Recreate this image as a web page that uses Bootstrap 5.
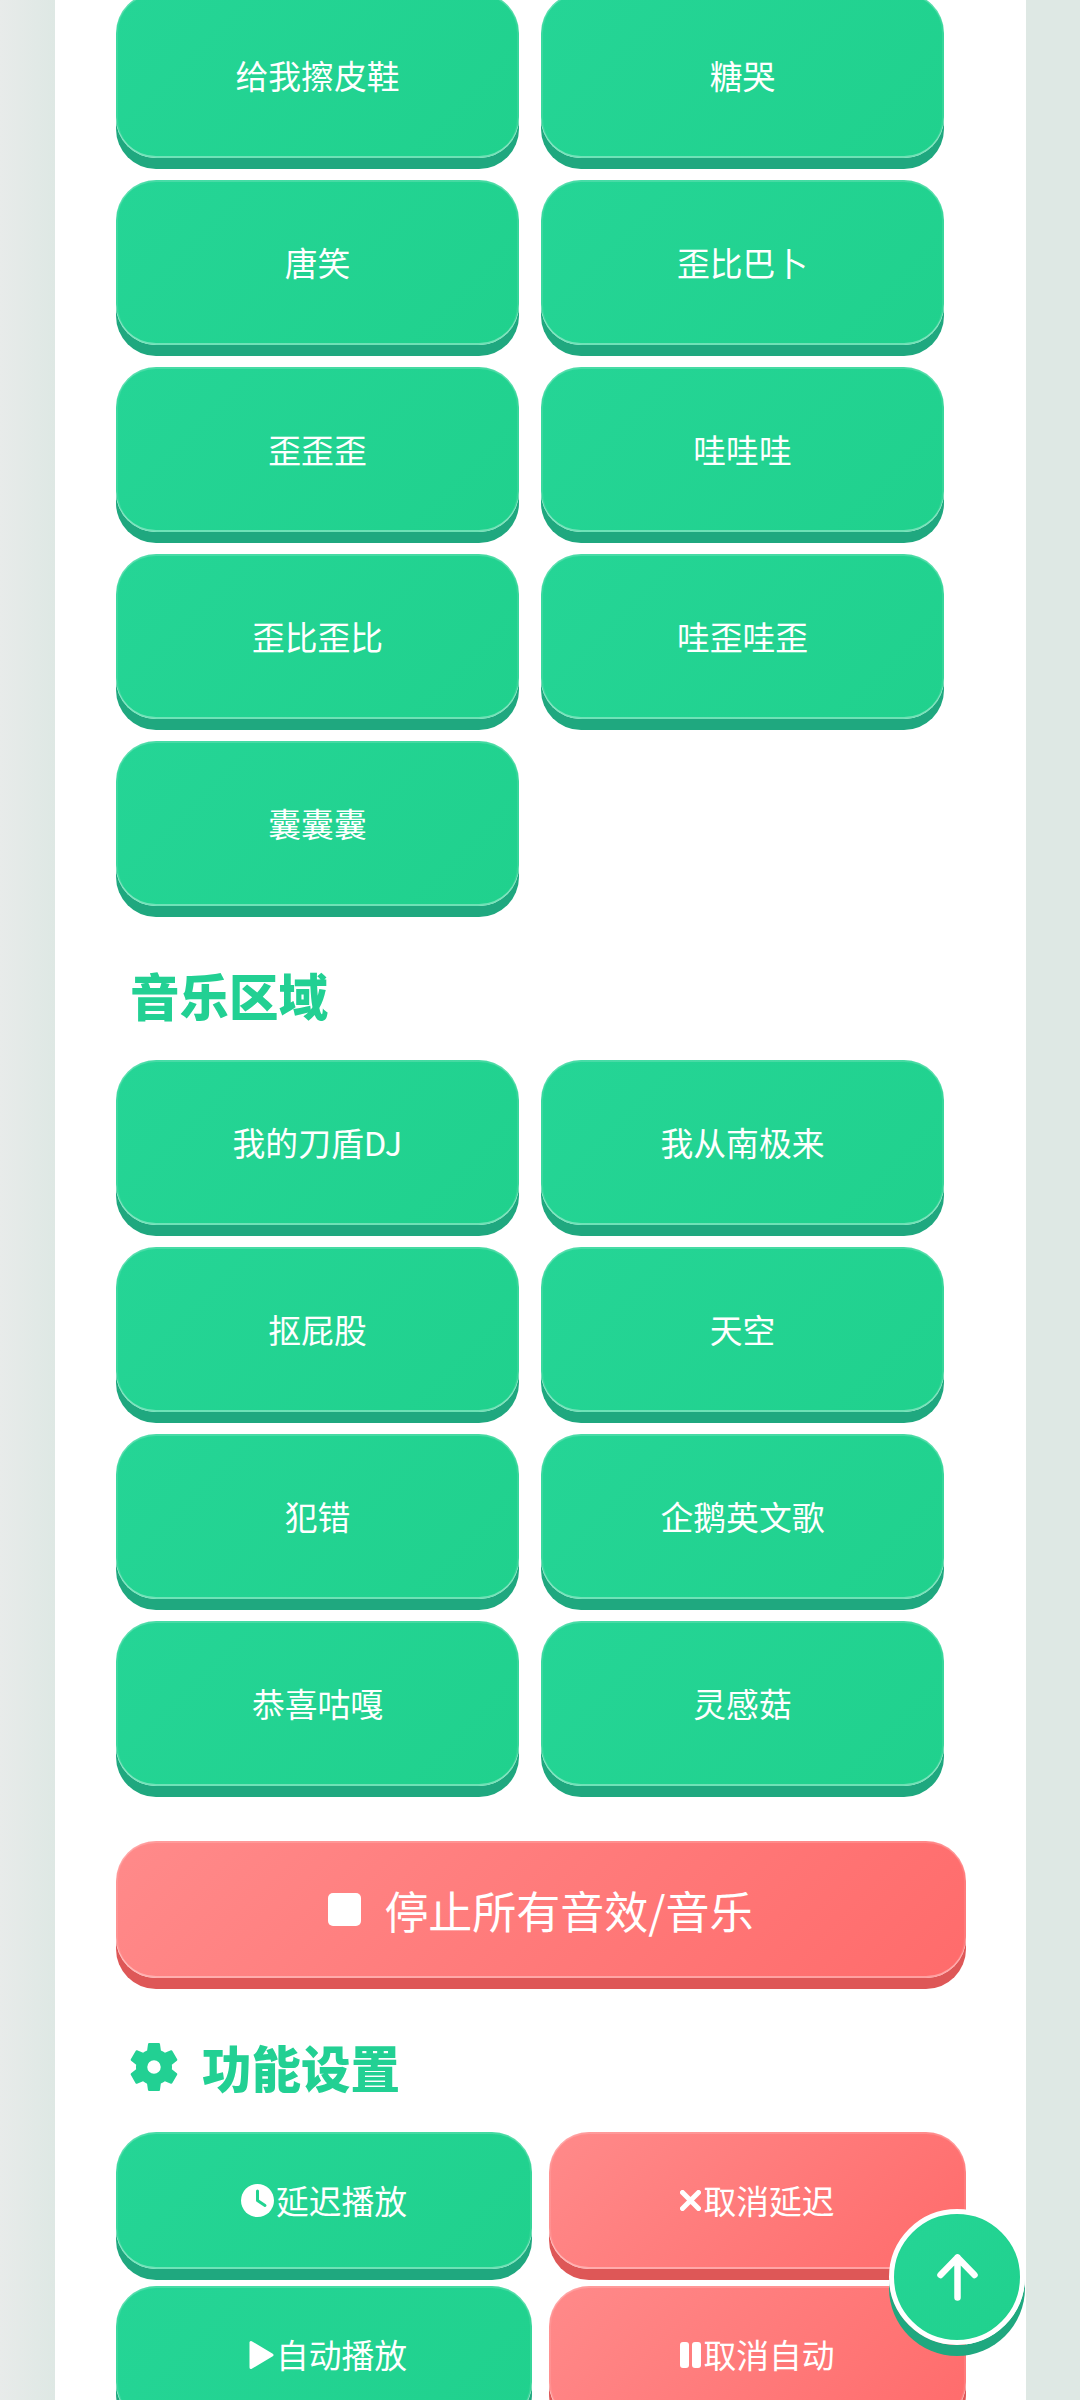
<!DOCTYPE html>
<html lang="en">
<head>
  <meta charset="UTF-8" />
  <meta name="viewport" content="width=device-width, initial-scale=1.0" />
  <title>音效板</title>
  <link href="https://cdn.jsdelivr.net/npm/bootstrap@5.3.3/dist/css/bootstrap.min.css" rel="stylesheet">
  <script src="https://cdn.jsdelivr.net/npm/bootstrap@5.3.3/dist/js/bootstrap.bundle.min.js"></script>
  <style>
    html, body {
      height: 2400px;
      overflow: hidden;
    }

    body {
      margin: 0;
      font-family: "Noto Sans CJK SC", "Noto Sans", sans-serif;
      background: linear-gradient(90deg, #e8ebea 0, #dee8e4 55px, #dee8e4 100%);
    }

    .sheet {
      width: 971px;
      height: 2407px;
      margin: -7px 0 0 55px;
      padding: 0 60px 0 61px;
      background: #fff;
    }

    .pad-grid {
      display: grid;
      grid-template-columns: 403px 403px;
      column-gap: 22px;
      row-gap: 11px;
    }

    .pad-grid-wide {
      grid-template-columns: 416px 417px;
      column-gap: 17px;
      row-gap: 17px;
    }

    .pad {
      display: flex;
      align-items: center;
      justify-content: center;
      width: 100%;
      height: 165px;
      margin-bottom: 11px;
      padding: 0;
      border: 0;
      border-radius: 40px;
      font-size: 32.8px;
      line-height: 1;
      color: #fff;
      background: linear-gradient(135deg, #25d596, #20d18d);
      box-shadow: 0 11px 0 #1fa87f, inset 0 -2px 0 rgba(255, 255, 255, 0.35), inset 0 2px 0 rgba(255, 255, 255, 0.16), inset 2px 0 0 rgba(255, 255, 255, 0.1), inset -2px 0 0 rgba(255, 255, 255, 0.1);
    }

    .pad-red {
      background: linear-gradient(135deg, #ff8a8a, #ff6b6b);
      box-shadow: 0 11px 0 #de5757, inset 0 -2px 0 rgba(255, 255, 255, 0.35), inset 0 2px 0 rgba(255, 255, 255, 0.16), inset 2px 0 0 rgba(255, 255, 255, 0.1), inset -2px 0 0 rgba(255, 255, 255, 0.1);
    }

    .pad-short {
      height: 137px;
      margin-bottom: 0;
    }

    .pad-stop {
      height: 137px;
      margin-bottom: 11px;
      font-size: 44px;
      gap: 23px;
    }

    .pad-stop svg {
      width: 33px;
      height: 33px;
    }

    .pad-short svg {
      flex: none;
      margin-right: 2px;
    }

    .sec-title {
      display: flex;
      align-items: center;
      gap: 24px;
      margin: 0;
      padding-left: 14px;
      font-size: 49.5px;
      font-weight: 900;
      line-height: 60px;
      color: #22d093;
    }

    .sec-music {
      padding-top: 48px;
      padding-bottom: 35px;
    }

    .sec-stop {
      padding-top: 44px;
    }

    .sec-settings {
      padding-top: 48px;
      padding-bottom: 35px;
    }

    .to-top {
      position: fixed;
      left: 889px;
      top: 2209px;
      display: flex;
      align-items: center;
      justify-content: center;
      width: 136px;
      height: 136px;
      padding: 0;
      border: 5px solid #fff;
      border-radius: 50%;
      background: linear-gradient(135deg, #25d596, #20d18d);
      box-shadow: 0 11px 0 #1fa87f;
    }
  </style>
</head>
<body>
  <main class="sheet">
    <div class="pad-grid">
      <button class="pad">给我擦皮鞋</button>
      <button class="pad">糖哭</button>
      <button class="pad">唐笑</button>
      <button class="pad">歪比巴卜</button>
      <button class="pad">歪歪歪</button>
      <button class="pad">哇哇哇</button>
      <button class="pad">歪比歪比</button>
      <button class="pad">哇歪哇歪</button>
      <button class="pad">囊囊囊</button>
    </div>

    <h2 class="sec-title sec-music">音乐区域</h2>
    <div class="pad-grid">
      <button class="pad">我的刀盾DJ</button>
      <button class="pad">我从南极来</button>
      <button class="pad">抠屁股</button>
      <button class="pad">天空</button>
      <button class="pad">犯错</button>
      <button class="pad">企鹅英文歌</button>
      <button class="pad">恭喜咕嘎</button>
      <button class="pad">灵感菇</button>
    </div>

    <div class="sec-stop">
      <button class="pad pad-red pad-stop">
        <svg viewBox="0 0 33 33"><rect width="33" height="33" rx="5" fill="#fff"/></svg>
        <span>停止所有音效/音乐</span>
      </button>
    </div>

    <h2 class="sec-title sec-settings">
      <svg width="48" height="50" viewBox="2.4 2 19.2 20" fill="#22d093"><path fill-rule="evenodd" d="M19.14 12.94c.04-.3.06-.61.06-.94s-.02-.64-.07-.94l2.03-1.58a.49.49 0 0 0 .12-.61l-1.92-3.32a.49.49 0 0 0-.59-.22l-2.39.96c-.5-.38-1.03-.7-1.62-.94l-.36-2.54a.48.48 0 0 0-.48-.41h-3.84a.48.48 0 0 0-.47.41l-.36 2.54c-.59.24-1.13.57-1.62.94l-2.39-.96a.49.49 0 0 0-.59.22L2.73 8.87a.48.48 0 0 0 .12.61l2.03 1.58c-.05.3-.09.63-.09.94s.02.64.07.94l-2.03 1.58a.49.49 0 0 0-.12.61l1.92 3.32c.12.22.37.29.59.22l2.39-.96c.5.38 1.03.7 1.62.94l.36 2.54c.05.24.24.41.48.41h3.84c.24 0 .44-.17.47-.41l.36-2.54c.59-.24 1.13-.56 1.62-.94l2.39.96c.22.08.47 0 .59-.22l1.92-3.32a.48.48 0 0 0-.12-.61l-2.01-1.58zM12 14.7a2.7 2.7 0 1 1 0-5.4 2.7 2.7 0 0 1 0 5.4z"/></svg>
      <span>功能设置</span>
    </h2>
    <div class="pad-grid pad-grid-wide">
      <button class="pad pad-short">
        <svg width="33" height="33" viewBox="0 0 33 33"><circle cx="16.5" cy="16.5" r="16.5" fill="#fff"/><path d="M16.5 7v9.5l7.5 5" fill="none" stroke="#22d391" stroke-width="3" stroke-linecap="round" stroke-linejoin="round"/></svg>
        <span>延迟播放</span>
      </button>
      <button class="pad pad-red pad-short">
        <svg width="21" height="21" viewBox="0 0 21 21"><path d="M2.5 2.5l16 16M18.5 2.5l-16 16" fill="none" stroke="#fff" stroke-width="5" stroke-linecap="round"/></svg>
        <span>取消延迟</span>
      </button>
      <button class="pad pad-short">
        <svg width="33" height="30" viewBox="0 0 33 30"><path d="M10 2.5v25L31 15z" fill="#fff" stroke="#fff" stroke-width="3" stroke-linejoin="round"/></svg>
        <span>自动播放</span>
      </button>
      <button class="pad pad-red pad-short">
        <svg width="21" height="26" viewBox="0 0 21 26"><rect width="9" height="26" rx="3" fill="#fff"/><rect x="12" width="9" height="26" rx="3" fill="#fff"/></svg>
        <span>取消自动</span>
      </button>
    </div>
  </main>

  <button class="to-top" aria-label="回到顶部">
    <svg width="41" height="47" viewBox="0 0 41 47"><path d="M20.5 43.5V3.5M3.5 21L20.5 3.5l17 17.5" fill="none" stroke="#fff" stroke-width="6.5" stroke-linecap="round" stroke-linejoin="round"/></svg>
  </button>
</body>
</html>
